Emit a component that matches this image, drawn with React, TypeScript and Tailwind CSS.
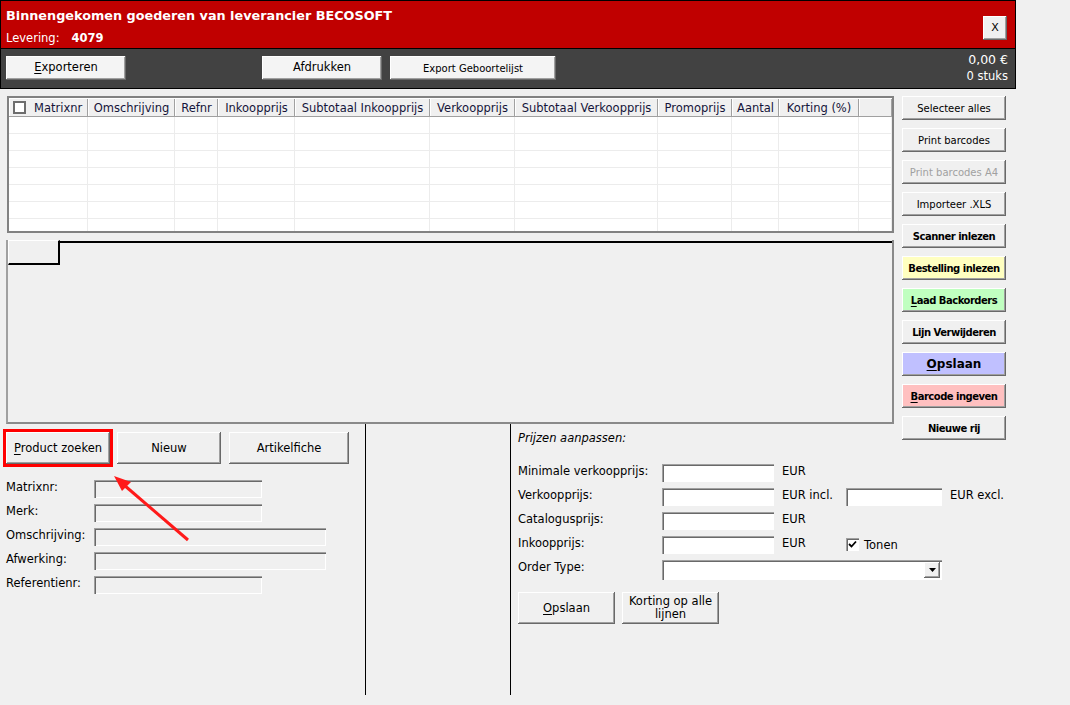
import React from 'react';

const raised =
  'shadow-[inset_-1px_-1px_0_#696969,inset_1px_1px_0_#ffffff,inset_-2px_-2px_0_#a0a0a0]';
const sunken =
  'shadow-[inset_1px_1px_0_#a0a0a0,inset_2px_2px_0_#696969,inset_-1px_-1px_0_#ffffff]';

const columns = [
  { label: 'Matrixnr', w: 'w-[79px]', check: true },
  { label: 'Omschrijving', w: 'w-[87px]' },
  { label: 'Refnr', w: 'w-[43px]' },
  { label: 'Inkoopprijs', w: 'w-[77px]' },
  { label: 'Subtotaal Inkoopprijs', w: 'w-[135px]' },
  { label: 'Verkoopprijs', w: 'w-[85px]' },
  { label: 'Subtotaal Verkoopprijs', w: 'w-[143px]' },
  { label: 'Promoprijs', w: 'w-[74px]' },
  { label: 'Aantal', w: 'w-[47px]' },
  { label: 'Korting (%)', w: 'w-[80px]' },
  { label: '', w: 'w-[33px]' },
];

const sideButtons = [
  { label: 'Selecteer alles', cls: 'bg-[#f0f0f0] text-black text-[10px]' },
  { label: 'Print barcodes', cls: 'bg-[#f0f0f0] text-black text-[10px]' },
  { label: 'Print barcodes A4', cls: 'bg-[#f0f0f0] text-[#a0a0a0] text-[10px]' },
  { label: 'Importeer .XLS', cls: 'bg-[#f0f0f0] text-black text-[10px]' },
  { label: 'Scanner inlezen', cls: 'bg-[#f0f0f0] font-bold text-[10px] tracking-[-0.5px]' },
  { label: 'Bestelling inlezen', cls: 'bg-[#ffffc0] font-bold text-[10px] tracking-[-0.5px]' },
  { label: 'Laad Backorders', cls: 'bg-[#c0ffc0] font-bold text-[10px] tracking-[-0.5px]', u: true },
  { label: 'Lijn Verwijderen', cls: 'bg-[#f0f0f0] font-bold text-[10px] tracking-[-0.5px]' },
  { label: 'Opslaan', cls: 'bg-[#c0c0ff] font-bold text-[12px]', u: true },
  { label: 'Barcode ingeven', cls: 'bg-[#ffc0c0] font-bold text-[10px] tracking-[-0.5px]', u: true },
  { label: 'Nieuwe rij', cls: 'bg-[#f0f0f0] font-bold text-[10px] tracking-[-0.5px]' },
];

function Label({ text, u }: { text: string; u?: boolean }) {
  if (!u) return <>{text}</>;
  return (
    <>
      <span className="underline underline-offset-2">{text[0]}</span>
      {text.slice(1)}
    </>
  );
}

function Input({ w, disabled }: { w: string; disabled?: boolean }) {
  return <div className={`${w} h-[18px] ${disabled ? 'bg-[#f0f0f0]' : 'bg-white'} ${sunken}`} />;
}

export default function App() {
  return (
    <div className="relative w-[1070px] h-[705px] overflow-hidden bg-[#f0f0f0] text-black font-['DejaVu_Sans',sans-serif] text-[11.5px]">
      {/* header */}
      <div className="w-[1016px]">
        <div className="h-[49px] bg-[#c00000] border border-black flex justify-between">
          <div className="pl-[5px] text-white">
            <div className="mt-[7px] text-[12.8px] font-bold leading-[16px]">
              Binnengekomen goederen van leverancier BECOSOFT
            </div>
            <div className="mt-[7px] leading-[14px] text-[11.5px]">
              Levering:<span className="ml-[12px] font-bold">4079</span>
            </div>
          </div>
          <button className={`mt-[15px] mr-[8px] w-[24px] h-[24px] bg-[#f0f0f0] text-[11px] ${raised}`}>
            X
          </button>
        </div>
        <div className="h-[40px] bg-[#424242] border border-black border-t-0 flex items-start pl-[5px]">
          <button className={`mt-[7px] w-[120px] h-[24px] bg-[#f4f4f4] text-[11.5px] ${raised}`}>
            <Label text="Exporteren" u />
          </button>
          <button className={`mt-[7px] ml-[136px] w-[120px] h-[24px] bg-[#f4f4f4] text-[11.5px] ${raised}`}>
            Afdrukken
          </button>
          <button className={`mt-[7px] ml-[8px] w-[166px] h-[24px] bg-[#f4f4f4] text-[10px] ${raised}`}>
            Export Geboortelijst
          </button>
          <div className="ml-auto mr-[7px] text-right text-white leading-[17px]">
            <div className="mt-[2px] text-[12.5px]">0,00 €</div>
            <div className="text-[11.5px]">0 stuks</div>
          </div>
        </div>
      </div>

      {/* main */}
      <div className="flex pt-[7px]">
        <div className="ml-[6px] w-[888px]">
          <div className="ml-[1px] h-[137px] border-2 border-[#828282] bg-white pt-[1px] overflow-hidden">
            <div className="flex h-[18px] bg-[#f0f0f0] border-b border-[#a0a0a0] text-[11.5px]">
              {columns.map((c, i) => (
                <div
                  key={i}
                  className={`${c.w} shrink-0 h-[17px] pt-[2px] flex items-center border-r border-[#a0a0a0] border-l border-l-white ${
                    c.check ? 'pl-[3px]' : 'justify-center'
                  }`}
                >
                  {c.check && (
                    <span className="w-[13px] h-[13px] border-2 border-[#6d6d6d] bg-white mr-[8px] shrink-0 -mt-[2px]" />
                  )}
                  <span className="whitespace-nowrap text-[#15153a]">{c.label}</span>
                </div>
              ))}
            </div>
            {Array.from({ length: 7 }).map((_, r) => (
              <div key={r} className="flex h-[17px] border-b border-[#ececec]">
                {columns.map((c, i) => (
                  <div key={i} className={`${c.w} shrink-0 border-r border-[#ececec]`} />
                ))}
              </div>
            ))}
          </div>

          <div className="mt-[7px] h-[184px] flex flex-col border-l-2 border-b-2 border-r-2 border-l-[#a0a0a0] border-b-[#8a8a8a] border-r-[#8a8a8a]">
            <div className="flex">
              <div className="w-[52px] h-[25px] bg-[#f0f0f0] border-t border-l border-white border-r-2 border-b-2 border-r-black border-b-black" />
              <div className="flex-1 border-t-2 border-black mt-[1px]" />
            </div>
          </div>
        </div>

        <div className="ml-[8px] w-[104px] h-[328px] flex flex-col gap-[8px]">
          {sideButtons.map((b) => (
            <button
              key={b.label}
              className={`shrink-0 w-[104px] h-[24px] whitespace-nowrap ${raised} ${b.cls}`}
            >
              <Label text={b.label} u={b.u} />
            </button>
          ))}
        </div>
      </div>

      {/* bottom */}
      <div className="flex h-[271px]">
        <div className="w-[366px] border-r border-black pt-[5px] pl-[3px]">
          <div className="flex items-start">
            <div className="border-[3px] border-[#ff0000]">
              <button className={`w-[104px] h-[32px] pt-[2px] bg-[#f0f0f0] text-[11.5px] ${raised}`}>
                <Label text="Product zoeken" u />
              </button>
            </div>
            <button className={`mt-[3px] ml-[4px] w-[104px] h-[32px] pt-[2px] bg-[#f0f0f0] text-[11.5px] ${raised}`}>
              Nieuw
            </button>
            <button className={`mt-[3px] ml-[8px] w-[120px] h-[32px] pt-[2px] bg-[#f0f0f0] text-[11.5px] ${raised}`}>
              Artikelfiche
            </button>
          </div>
          <div className="mt-[13px] pl-[3px] flex flex-col gap-[6px]">
            {[
              ['Matrixnr:', 'w-[168px]'],
              ['Merk:', 'w-[168px]'],
              ['Omschrijving:', 'w-[232px]'],
              ['Afwerking:', 'w-[232px]'],
              ['Referentienr:', 'w-[168px]'],
            ].map(([l, w]) => (
              <div key={l} className="flex items-start h-[18px]">
                <span className="w-[88px] leading-[15px]">{l}</span>
                <Input w={w} disabled />
              </div>
            ))}
          </div>
        </div>
        <div className="w-[145px] border-r border-black" />
        <div className="flex-1 pl-[7px] pt-[7px]">
          <div className="italic leading-[14px]">Prijzen aanpassen:</div>
          <div className="mt-[19px] flex flex-col gap-[6px]">
            <div className="flex h-[18px]">
              <span className="w-[144px] leading-[14px]">Minimale verkoopprijs:</span>
              <Input w="w-[112px]" />
              <span className="ml-[8px] leading-[14px]">EUR</span>
            </div>
            <div className="flex h-[18px]">
              <span className="w-[144px] leading-[14px]">Verkoopprijs:</span>
              <Input w="w-[112px]" />
              <span className="ml-[8px] w-[64px] leading-[14px]">EUR incl.</span>
              <Input w="w-[96px]" />
              <span className="ml-[8px] leading-[14px]">EUR excl.</span>
            </div>
            <div className="flex h-[18px]">
              <span className="w-[144px] leading-[14px]">Catalogusprijs:</span>
              <Input w="w-[112px]" />
              <span className="ml-[8px] leading-[14px]">EUR</span>
            </div>
            <div className="flex h-[18px]">
              <span className="w-[144px] leading-[14px]">Inkoopprijs:</span>
              <Input w="w-[112px]" />
              <span className="ml-[8px] w-[64px] leading-[14px]">EUR</span>
              <span className={`mt-[2px] w-[13px] h-[13px] bg-white ${sunken} flex items-center justify-center`}>
                <svg width="9" height="9" viewBox="0 0 9 9">
                  <path d="M1 4 L3.5 6.5 L8 1.5" stroke="#000" strokeWidth="1.8" fill="none" />
                </svg>
              </span>
              <span className="ml-[5px] leading-[18px]">Tonen</span>
            </div>
            <div className="flex h-[20px]">
              <span className="w-[144px] leading-[14px]">Order Type:</span>
              <div className={`w-[280px] h-[20px] bg-white ${sunken} flex justify-end items-center pr-[2px]`}>
                <div className={`w-[16px] h-[16px] bg-[#f0f0f0] ${raised} flex items-center justify-center`}>
                  <svg width="7" height="4" viewBox="0 0 7 4">
                    <path d="M0 0 H7 L3.5 4 Z" fill="#000" />
                  </svg>
                </div>
              </div>
            </div>
          </div>
          <div className="mt-[12px] flex gap-[7px]">
            <button className={`w-[97px] h-[32px] pt-[2px] bg-[#f0f0f0] text-[11.5px] ${raised}`}>
              <Label text="Opslaan" u />
            </button>
            <button className={`w-[97px] h-[32px] bg-[#f0f0f0] text-[11.5px] leading-[13px] ${raised}`}>
              Korting op alle
              <br />
              lijnen
            </button>
          </div>
        </div>
      </div>

      {/* annotation arrow */}
      <svg className="absolute left-0 top-0 pointer-events-none" width="1070" height="705">
        <line x1="188" y1="540" x2="124" y2="485" stroke="#ff1a1a" strokeWidth="3" />
        <path d="M114 476 L131 482 L122 491 Z" fill="#ff1a1a" />
      </svg>
    </div>
  );
}
